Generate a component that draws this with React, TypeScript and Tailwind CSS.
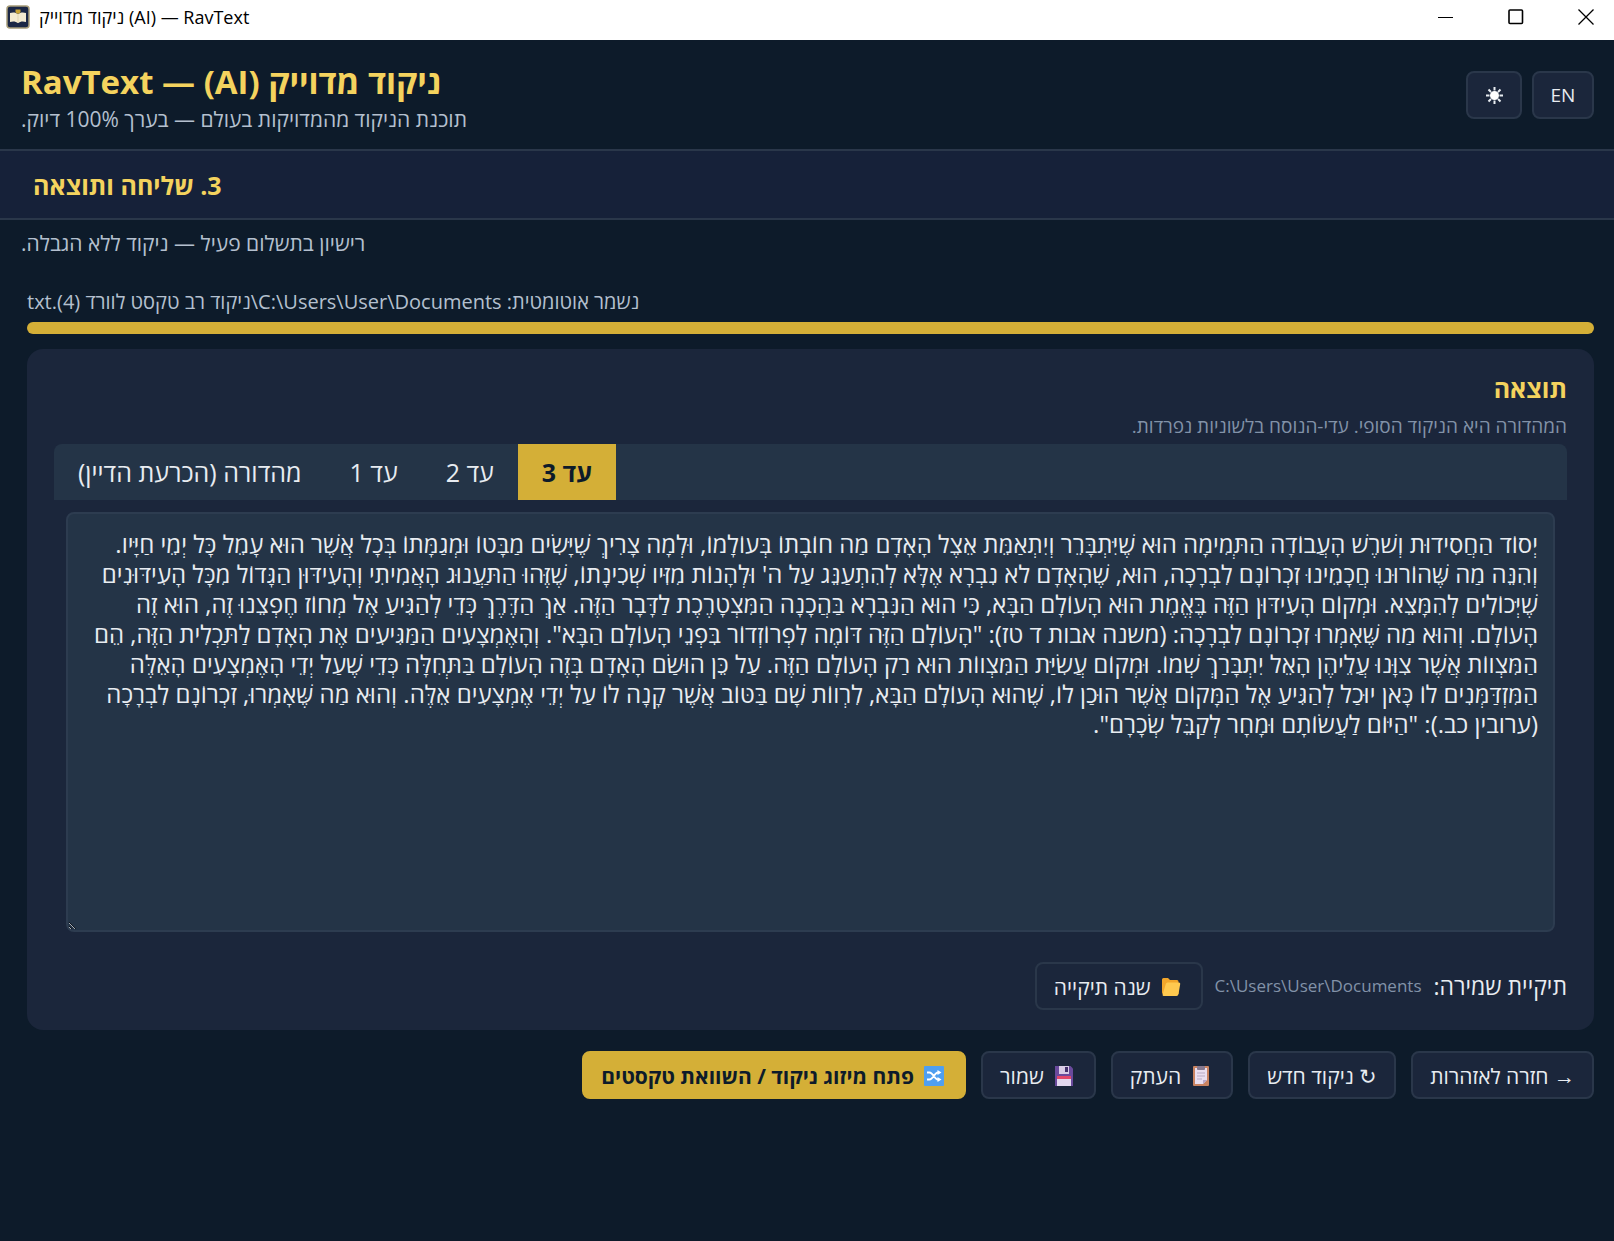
import { useState } from 'react';
import type { ReactNode } from 'react';

const RESULT_TEXT = `יְסוֹד הַחֲסִידוּת וְשֹׁרֶשׁ הָעֲבוֹדָה הַתְּמִימָה הוּא שֶׁיִּתְבָּרֵר וְיִתְאַמֵּת אֵצֶל הָאָדָם מַה חוֹבָתוֹ בְּעוֹלָמוֹ, וּלְמָה צָרִיךְ שֶׁיָּשִׂים מַבָּטוֹ וּמְגַמָּתוֹ בְּכָל אֲשֶׁר הוּא עָמֵל כָּל יְמֵי חַיָּיו.
וְהִנֵּה מַה שֶּׁהוֹרוּנוּ חֲכָמֵינוּ זִכְרוֹנָם לִבְרָכָה, הוּא, שֶׁהָאָדָם לֹא נִבְרָא אֶלָּא לְהִתְעַנֵּג עַל ה' וּלְהָנוֹת מִזִּיו שְׁכִינָתוֹ, שֶׁזֶּהוּ הַתַּעֲנוּג הָאֲמִיתִי וְהָעִידּוּן הַגָּדוֹל מִכָּל הָעִידּוּנִים
שֶׁיְּכוֹלִים לְהִמָּצֵא. וּמְקוֹם הָעִידּוּן הַזֶּה בֶּאֱמֶת הוּא הָעוֹלָם הַבָּא, כִּי הוּא הַנִּבְרָא בַּהֲכָנָה הַמִּצְטָרֶכֶת לַדָּבָר הַזֶּה. אַךְ הַדֶּרֶךְ כְּדֵי לְהַגִּיעַ אֶל מְחוֹז חֶפְצֵנוּ זֶה, הוּא זֶה
הָעוֹלָם. וְהוּא מַה שֶּׁאָמְרוּ זִכְרוֹנָם לִבְרָכָה: (משנה אבות ד טז): "הָעוֹלָם הַזֶּה דּוֹמֶה לִפְרוֹזְדוֹר בִּפְנֵי הָעוֹלָם הַבָּא". וְהָאֶמְצָעִים הַמַּגִּיעִים אֶת הָאָדָם לַתַּכְלִית הַזֶּה, הֵם
הַמִּצְווֹת אֲשֶׁר צִוָּנוּ עֲלֵיהֶן הָאֵל יִתְבָּרַךְ שְׁמוֹ. וּמְקוֹם עֲשִׂיַּת הַמִּצְווֹת הוּא רַק הָעוֹלָם הַזֶּה. עַל כֵּן הוּשַׂם הָאָדָם בְּזֶה הָעוֹלָם בַּתְּחִלָּה כְּדֵי שֶׁעַל יְדֵי הָאֶמְצָעִים הָאֵלֶּה
הַמִּזְדַּמְּנִים לוֹ כָּאן יוּכַל לְהַגִּיעַ אֶל הַמָּקוֹם אֲשֶׁר הוּכַן לוֹ, שֶׁהוּא הָעוֹלָם הַבָּא, לִרְווֹת שָׁם בַּטּוֹב אֲשֶׁר קָנָה לוֹ עַל יְדֵי אֶמְצָעִים אֵלֶּה. וְהוּא מַה שֶּׁאָמְרוּ, זִכְרוֹנָם לִבְרָכָה
(ערובין כב.): "הַיּוֹם לַעֲשׂוֹתָם וּמָחָר לְקַבֵּל שְׂכָרָם".`;

const TABS = ['מהדורה (הכרעת הדיין)', 'עד 1', 'עד 2', 'עד 3'];

function AppIcon() {
  return (
    <svg width="24" height="24" viewBox="0 0 24 24" aria-hidden="true">
      <rect x="1" y="1" width="22" height="22" rx="3" fill="#1b2745" stroke="#a79c78" strokeWidth="1.5" />
      <path d="M4 8c3-1 6-.5 8 1 2-1.500 5-2 8-1v9c-3-1-6-.5-8 1-2-1.500-5-2-8-1z" fill="#f3ead0" />
      <path d="M12 9v9" stroke="#e0d5b2" strokeWidth="1" />
      <path d="M9.500 4.500h5v3L12 9 9.500 7.500z" fill="#c9a437" />
    </svg>
  );
}

function FolderIcon() {
  return (
    <svg width="20" height="20" viewBox="0 0 20 20" aria-hidden="true">
      <path d="M1 2.500Q1 1 2.500 1H7l2 2h7q1.500 0 1.500 1.500V17H2.500Q1 17 1 15.500z" fill="#f2a62b" />
      <path d="M6.500 5.500H18q1.500 0 1.200 1.500L17.500 17q-.3 2-2 2H2.500q-1.200-.3-.9-1.500L4.800 7q.4-1.500 1.700-1.500z" fill="#ffc94f" />
    </svg>
  );
}

function ClipboardIcon() {
  return (
    <svg width="20" height="22" viewBox="0 0 20 22" aria-hidden="true">
      <rect x="2" y="1" width="16" height="20" rx="1" fill="#c98361" />
      <path d="M4 3h12v12l-4 4H4z" fill="#eadff0" />
      <path d="M16 15l-4 4v-4z" fill="#bba9c9" />
      <rect x="6" y="1" width="8" height="4" rx="1" fill="#85788f" />
      <path d="M6 8h8M6 11h8M6 14h5" stroke="#b9abc6" strokeWidth="1" />
    </svg>
  );
}

function FloppyIcon() {
  return (
    <svg width="20" height="22" viewBox="0 0 20 22" aria-hidden="true">
      <path d="M1 1h15.500L19 3.500V21H1z" fill="#6a4a9c" />
      <rect x="5" y="1" width="10" height="8" fill="#d8cce6" />
      <rect x="11" y="2" width="3" height="5" fill="#43306b" />
      <rect x="3" y="11" width="14" height="10" fill="#e3d8ef" />
      <rect x="3" y="11" width="14" height="3" fill="#e2476b" />
    </svg>
  );
}

function ShuffleIcon() {
  return (
    <svg width="20" height="20" viewBox="0 0 20 20" aria-hidden="true">
      <rect x="0" y="0" width="20" height="20" rx="1" fill="#4f9ff0" />
      <path
        d="M3 6.500h2.500c3.500 0 5 7 8.500 7h1M3 13.500h2.500c3.500 0 5-7 8.500-7h1"
        fill="none"
        stroke="#fff"
        strokeWidth="1.800"
      />
      <path d="M13.500 4l4 2.500-4 2.500zM13.500 11l4 2.500-4 2.500z" fill="#fff" />
    </svg>
  );
}

function SunIcon() {
  return (
    <svg width="17" height="17" viewBox="0 0 17 17" aria-hidden="true">
      <circle cx="8.500" cy="8.500" r="4.500" fill="#fff" />
      <path
        d="M8.500 0v3.500M8.500 13.500V17M0 8.500h3.500M13.500 8.500H17M2.500 2.500L5 5M12 12l2.500 2.500M14.500 2.500L12 5M5 12l-2.500 2.500"
        stroke="#e9edf2"
        strokeWidth="2"
      />
    </svg>
  );
}

interface ActionButtonProps {
  icon?: ReactNode;
  children: ReactNode;
  primary?: boolean;
}

function ActionButton({ icon, children, primary }: ActionButtonProps) {
  return (
    <button
      type="button"
      className={`flex h-12 items-center gap-2.5 rounded-lg border-2 pt-px text-[21px] leading-6 ${
        primary
          ? 'border-[#d4af37] bg-[#d4af37] font-bold text-[#0d1b2a]'
          : 'border-[#2a374a] bg-[#1b263b] text-[#e8ecf1] hover:bg-[#243447]'
      } ${icon ? 'ps-5 pe-[17px]' : 'px-[17px]'}`}
    >
      {icon}
      <span>{children}</span>
    </button>
  );
}

export default function App() {
  const [activeTab, setActiveTab] = useState(3);

  return (
    <div className="flex min-h-screen flex-col bg-[#0d1b2a] font-['Open_Sans','Noto_Sans',sans-serif] text-[#e8ecf1]">
      <div className="flex h-10 items-center justify-between bg-white pb-1.5 pl-1.5 text-black">
        <div className="flex items-center gap-[9px]">
          <AppIcon />
          <span className="text-[18px] leading-6">ניקוד מדוייק (AI) — RavText</span>
        </div>
        <div className="flex items-center gap-[54px] pr-5">
          <button type="button" aria-label="Minimize">
            <svg width="16" height="16" viewBox="0 0 16 16">
              <path d="M0 8.500h15" stroke="#000" />
            </svg>
          </button>
          <button type="button" aria-label="Maximize">
            <svg width="16" height="16" viewBox="0 0 16 16">
              <rect x="1" y="1" width="13.500" height="13.500" rx="1" fill="none" stroke="#000" strokeWidth="1.600" />
            </svg>
          </button>
          <button type="button" aria-label="Close">
            <svg width="16" height="16" viewBox="0 0 16 16">
              <path d="M.5.5l15 15M15.500.5l-15 15" stroke="#000" strokeWidth="1.300" />
            </svg>
          </button>
        </div>
      </div>

      <header className="flex items-start justify-between border-b-2 border-[#2a374a] pt-5 pr-5 pb-4 pl-[21px]">
        <div dir="rtl" className="flex flex-col items-end">
          <h1 className="text-[33px] leading-[44px] font-bold text-[#f4d35e]">ניקוד מדוייק (AI) — RavText</h1>
          <p className="mt-px text-[21px] leading-7 text-[#b4c0cf]">תוכנת הניקוד מהמדויקות בעולם — בערך 100% דיוק.</p>
        </div>
        <div className="flex gap-2.5 pt-[11px]">
          <button
            type="button"
            aria-label="Toggle theme"
            className="flex h-12 w-14 items-center justify-center rounded-lg border-2 border-[#2a374a] bg-[#1b263b]"
          >
            <SunIcon />
          </button>
          <button
            type="button"
            className="h-12 w-[62px] rounded-lg border-2 border-[#2a374a] bg-[#1b263b] text-[19px] leading-6"
          >
            EN
          </button>
        </div>
      </header>

      <div className="flex h-[69px] items-center border-b-2 border-[#2a374a] bg-[#162139] px-[33px]">
        <h2 dir="rtl" className="text-[25px] leading-8 font-bold text-[#f4d35e]">
          3. שליחה ותוצאה
        </h2>
      </div>

      <div className="flex px-[21px] pt-2.5">
        <p dir="rtl" className="text-[21px] leading-[26px] text-[#b4c0cf]">
          רישיון בתשלום פעיל — ניקוד ללא הגבלה.
        </p>
      </div>

      <main className="pt-[33px] pr-5 pl-[27px]">
        <div className="flex">
          <p dir="rtl" className="text-[20px] leading-[26px] text-[#b4c0cf]">
            נשמר אוטומטית: C:\Users\User\Documents\ניקוד רב טקסט לוורד (4).txt
          </p>
        </div>
        <div
          role="progressbar"
          aria-valuenow={100}
          aria-valuemin={0}
          aria-valuemax={100}
          className="mt-[7px] h-3 rounded-full bg-[#d4af37]"
        />

        <section dir="rtl" className="mt-[15px] rounded-2xl bg-[#1b263b] px-[27px] pt-6 pb-5">
          <h3 className="text-[25px] leading-[30px] font-bold text-[#f4d35e]">תוצאה</h3>
          <p className="mt-2.5 text-[19px] leading-[26px] text-[#8292a8]">
            המהדורה היא הניקוד הסופי. עדי-הנוסח בלשוניות נפרדות.
          </p>

          <div dir="ltr" role="tablist" className="mt-[5px] flex overflow-hidden rounded-t-lg bg-[#243447]">
            {TABS.map((label, i) => (
              <button
                key={label}
                type="button"
                role="tab"
                dir="rtl"
                aria-selected={activeTab === i}
                onClick={() => setActiveTab(i)}
                className={`h-14 px-6 text-[25px] leading-8 ${
                  activeTab === i ? 'bg-[#d4af37] font-bold text-[#0d1b2a]' : 'text-[#e8ecf1] hover:bg-[#2a3c51]'
                }`}
              >
                {label}
              </button>
            ))}
          </div>

          <div className="flex px-3 pt-3">
            <textarea
              aria-label="תוצאה"
              defaultValue={RESULT_TEXT}
              spellCheck={false}
              className="h-[420px] w-full resize rounded-lg border-2 border-[#2d3c50] bg-[#243447] px-[15px] py-[15px] text-[24px] leading-[30px] text-[#e8ecf1] outline-none"
            />
          </div>

          <div className="mt-[30px] flex items-center gap-3">
            <span className="text-[23px] leading-6">תיקיית שמירה:</span>
            <span dir="ltr" className="text-[17px] leading-6 text-[#8292a8]">
              C:\Users\User\Documents
            </span>
            <ActionButton icon={<FolderIcon />}>שנה תיקייה</ActionButton>
          </div>
        </section>

        <div dir="rtl" className="mt-[21px] flex flex-wrap gap-[15px]">
          <ActionButton>→ חזרה לאזהרות</ActionButton>
          <ActionButton>↻ ניקוד חדש</ActionButton>
          <ActionButton icon={<ClipboardIcon />}>העתק</ActionButton>
          <ActionButton icon={<FloppyIcon />}>שמור</ActionButton>
          <ActionButton primary icon={<ShuffleIcon />}>
            פתח מיזוג ניקוד / השוואת טקסטים
          </ActionButton>
        </div>
      </main>
    </div>
  );
}
